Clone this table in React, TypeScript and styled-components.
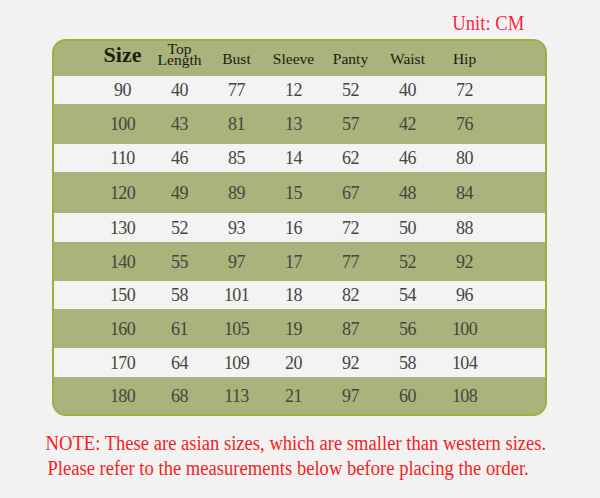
import styled, { createGlobalStyle } from 'styled-components';

const GlobalStyle = createGlobalStyle`
  html, body {
    margin: 0;
    padding: 0;
    background: #f2f2f2;
  }
`;

const columns = ['Size', 'Top Length', 'Bust', 'Sleeve', 'Panty', 'Waist', 'Hip'];

const rows = [
  { size: 90, values: [40, 77, 12, 52, 40, 72], height: 28 },
  { size: 100, values: [43, 81, 13, 57, 42, 76], height: 40 },
  { size: 110, values: [46, 85, 14, 62, 46, 80], height: 28 },
  { size: 120, values: [49, 89, 15, 67, 48, 84], height: 41 },
  { size: 130, values: [52, 93, 16, 72, 50, 88], height: 29 },
  { size: 140, values: [55, 97, 17, 77, 52, 92], height: 39 },
  { size: 150, values: [58, 101, 18, 82, 54, 96], height: 28 },
  { size: 160, values: [61, 105, 19, 87, 56, 100], height: 39 },
  { size: 170, values: [64, 109, 20, 92, 58, 104], height: 29 },
  { size: 180, values: [68, 113, 21, 97, 60, 108], height: 37 },
];

// --- Layout ---

const Page = styled.div`
  width: 600px;
  height: 498px;
  background: #f2f2f2;
  font-family: 'Liberation Serif', 'Times New Roman', serif;
  overflow: hidden;
`;

const UnitLabel = styled.div`
  padding: 13px 85px 0 0;
  text-align: right;
  font-size: 21px;
  line-height: 21px;
  color: #ff1f45;
  transform: scaleX(0.89);
  transform-origin: right center;
`;

// --- Tabela ---

const Chart = styled.div`
  margin: 5px 0 0 52px;
  width: 495px;
  box-sizing: border-box;
  border: 2px solid #9db03e;
  border-radius: 14px;
  overflow: hidden;
  background: #a9b37b;
`;

const Row = styled.div<{ light?: boolean; h: number }>`
  display: grid;
  grid-template-columns: repeat(7, 57px);
  padding-left: 40px;
  height: ${({ h }) => `${h}px`};
  background: ${({ light }) => (light ? '#f3f3f3' : '#a9b37b')};
  align-items: center;
`;

const HeaderRow = styled(Row)`
  align-items: end;
`;

const HeadCell = styled.div<{ big?: boolean }>`
  text-align: center;
  color: #1c1c14;
  font-size: ${({ big }) => (big ? '22px' : '15.5px')};
  font-weight: ${({ big }) => (big ? 700 : 400)};
  line-height: 1;
  padding-bottom: 10px;
`;

const StackedHead = styled(HeadCell)`
  line-height: 11px;
  padding-bottom: 11px;
  display: flex;
  flex-direction: column;
  align-items: center;
`;

const Cell = styled.div`
  text-align: center;
  font-size: 18px;
  letter-spacing: -0.6px;
  line-height: 1;
  color: #464640;
`;

// --- Nota ---

const Note = styled.div`
  margin-top: 15px;
  padding-left: 49px;
  font-size: 20px;
  line-height: 25px;
  color: #f41e22;
  white-space: nowrap;
  transform: scaleX(0.93);
  transform-origin: left center;
`;

const NoteLine = styled.div<{ indent?: number }>`
  padding-left: ${({ indent }) => `${indent ?? 0}px`};
`;

export default function App() {
  return (
    <Page>
      <GlobalStyle />
      <UnitLabel>Unit: CM</UnitLabel>

      <Chart>
        <HeaderRow h={35}>
          {columns.map((col, i) =>
            i === 0 ? (
              <HeadCell key={col} big>
                {col}
              </HeadCell>
            ) : i === 1 ? (
              <StackedHead key={col}>
                <span>Top</span>
                <span>Length</span>
              </StackedHead>
            ) : (
              <HeadCell key={col}>{col}</HeadCell>
            )
          )}
        </HeaderRow>
        {rows.map((row, i) => (
          <Row key={row.size} light={i % 2 === 0} h={row.height}>
            <Cell>{row.size}</Cell>
            {row.values.map((v, j) => (
              <Cell key={j}>{v}</Cell>
            ))}
          </Row>
        ))}
      </Chart>

      <Note>
        <NoteLine>NOTE: These are asian sizes, which are smaller than western sizes.</NoteLine>
        <NoteLine indent={2}>Please refer to the measurements below before placing the order.</NoteLine>
      </Note>
    </Page>
  );
}
